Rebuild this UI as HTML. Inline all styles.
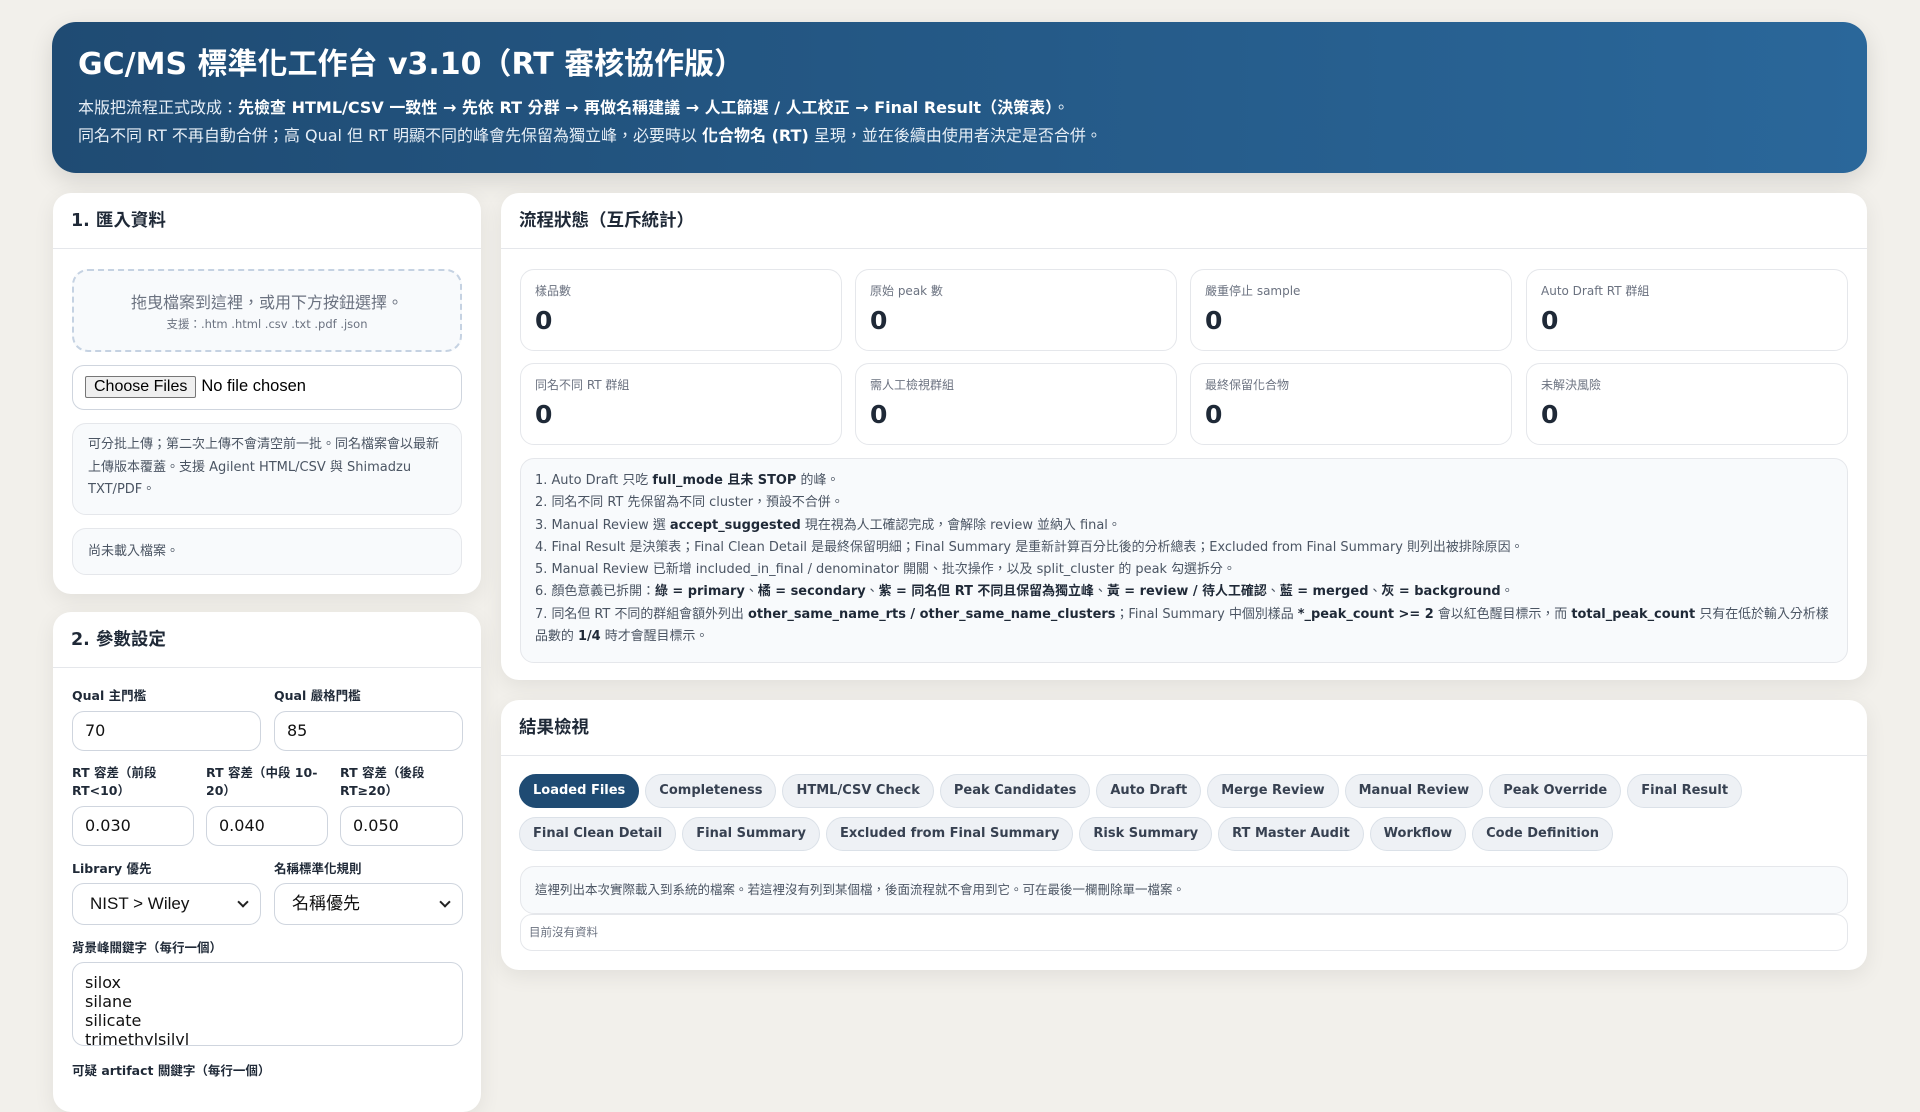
<!DOCTYPE html>
<html><head><meta charset="utf-8"><style>
*{box-sizing:border-box;margin:0;padding:0}
body{width:1920px;height:1080px;overflow:hidden;background:#f2f0eb;font-family:"DejaVu Sans","Liberation Sans","Noto Sans CJK TC",sans-serif;color:#1f2937;position:relative}
.hdr{position:absolute;left:52px;top:22px;width:1815px;height:151px;border-radius:24px;background:linear-gradient(90deg,#1f4b73,#2a679a);color:#fff;padding:22px 26px;box-shadow:0 8px 24px rgba(0,0,0,.12)}
.hdr h1{font-size:30px;font-weight:bold;line-height:42px;margin-bottom:8px}
.hdr p{font-size:16px;line-height:28px;color:#e6eef6}
.hdr b{color:#fff}
.card{position:absolute;background:#fff;border-radius:18px;box-shadow:0 6px 22px rgba(0,0,0,.07)}
.ch{height:56px;border-bottom:1px solid #e5e7eb;padding:0 18px;font-size:17.5px;font-weight:bold;line-height:56px;color:#1f2937}
.abs{position:absolute}
.drop{left:19px;top:76px;width:390px;height:83px;border:2px dashed #c5d2e2;border-radius:16px;background:#f8fafc;text-align:center;color:#6b7280}
.drop .a{font-size:16px;margin-top:18px}
.drop .b{font-size:11.5px;margin-top:3px}
.file{left:19px;top:172px;width:390px;height:45px;border:1px solid #cfd5de;border-radius:12px;font-family:"Liberation Sans",sans-serif;font-size:16.5px;padding:10px 12px;color:#000}
.file span.btn{display:inline-block;border:1px solid #767676;background:#efefef;border-radius:2px;padding:1px 8px;font-size:16px;margin-right:5px}
.note{left:19px;width:390px;background:#f8fafc;border:1px solid #e5e7eb;border-radius:14px;font-size:13px;color:#4b5563;line-height:22.5px;padding:12px 15px}
label{position:absolute;font-size:12.5px;font-weight:bold;color:#1f2937;line-height:18px}
.inp{position:absolute;border:1px solid #cfd5de;border-radius:12px;height:40px;font-size:16px;padding:0 12px;line-height:38px;color:#111}
.sel{height:42px;font-family:"Liberation Sans","Noto Sans CJK TC",sans-serif;font-size:17px;padding-left:17px;line-height:40px}
.sel:after{content:"";position:absolute;right:13px;top:14px;width:6px;height:6px;border-right:2px solid #222;border-bottom:2px solid #222;transform:rotate(45deg)}
.stat{position:absolute;width:322px;height:82px;border:1px solid #e5e7eb;border-radius:14px;padding:14px 14px}
.stat .l{font-size:12px;color:#6b7280;line-height:14px}
.stat .v{font-size:25px;font-weight:bold;color:#1f2937;margin-top:8px;line-height:30px}
.notes{left:19px;top:265px;width:1328px;height:205px;background:#f8fafc;border:1px solid #e5e7eb;border-radius:14px;padding:11px 14px;font-size:12.95px;line-height:22.3px;color:#4b5563}
.notes b{color:#1f2937}
.tabs{position:absolute;left:18px;top:74px;width:1320px}
.tab{display:inline-block;height:34px;line-height:32px;padding:0 13px;border:1px solid #dbe1e8;background:#eef1f5;border-radius:17px;font-size:13px;font-weight:bold;color:#374151;margin:0 6px 9px 0}
.tab.on{background:#1f4b73;color:#fff;border-color:#1f4b73}
</style></head><body>
<div class="hdr">
<h1>GC/MS 標準化工作台 v3.10（RT 審核協作版）</h1>
<p>本版把流程正式改成：<b>先檢查 HTML/CSV 一致性 → 先依 RT 分群 → 再做名稱建議 → 人工篩選 / 人工校正 → Final Result（決策表）</b>。</p>
<p>同名不同 RT 不再自動合併；高 Qual 但 RT 明顯不同的峰會先保留為獨立峰，必要時以 <b>化合物名 (RT)</b> 呈現，並在後續由使用者決定是否合併。</p>
</div>

<div class="card" style="left:53px;top:193px;width:428px;height:401px">
<div class="ch">1. 匯入資料</div>
<div class="abs drop"><div class="a">拖曳檔案到這裡，或用下方按鈕選擇。</div><div class="b">支援：.htm .html .csv .txt .pdf .json</div></div>
<div class="abs file"><span class="btn">Choose Files</span>No file chosen</div>
<div class="abs note" style="top:230px;height:92px;padding-top:10px">可分批上傳；第二次上傳不會清空前一批。同名檔案會以最新上傳版本覆蓋。支援 Agilent HTML/CSV 與 Shimadzu TXT/PDF。</div>
<div class="abs note" style="top:335px;height:47px;padding-top:12px">尚未載入檔案。</div>
</div>

<div class="card" style="left:53px;top:612px;width:428px;height:500px">
<div class="ch" style="height:56px">2. 參數設定</div>
<label style="left:19px;top:75px">Qual 主門檻</label>
<label style="left:221px;top:75px">Qual 嚴格門檻</label>
<div class="inp" style="left:19px;top:99px;width:189px">70</div>
<div class="inp" style="left:221px;top:99px;width:189px">85</div>
<label style="left:19px;top:152px;width:120px">RT 容差（前段 RT&lt;10）</label>
<label style="left:153px;top:152px;width:120px">RT 容差（中段 10-20）</label>
<label style="left:287px;top:152px;width:120px">RT 容差（後段 RT≥20）</label>
<div class="inp" style="left:19px;top:194px;width:122px">0.030</div>
<div class="inp" style="left:153px;top:194px;width:122px">0.040</div>
<div class="inp" style="left:287px;top:194px;width:123px">0.050</div>
<label style="left:19px;top:248px">Library 優先</label>
<label style="left:221px;top:248px">名稱標準化規則</label>
<div class="inp sel" style="left:19px;top:271px;width:189px">NIST &gt; Wiley</div>
<div class="inp sel" style="left:221px;top:271px;width:189px">名稱優先</div>
<label style="left:19px;top:327px">背景峰關鍵字（每行一個）</label>
<div class="inp" style="left:19px;top:350px;width:391px;height:84px;line-height:19px;padding-top:10px;font-size:16px;overflow:hidden">silox<br>silane<br>silicate<br>trimethylsilyl</div>
<label style="left:19px;top:450px">可疑 artifact 關鍵字（每行一個）</label>
</div>

<div class="card" style="left:501px;top:193px;width:1366px;height:487px">
<div class="ch">流程狀態（互斥統計）</div>
<div class="stat" style="left:19px;top:76px"><div class="l">樣品數</div><div class="v">0</div></div>
<div class="stat" style="left:354px;top:76px"><div class="l">原始 peak 數</div><div class="v">0</div></div>
<div class="stat" style="left:689px;top:76px"><div class="l">嚴重停止 sample</div><div class="v">0</div></div>
<div class="stat" style="left:1025px;top:76px"><div class="l">Auto Draft RT 群組</div><div class="v">0</div></div>
<div class="stat" style="left:19px;top:170px"><div class="l">同名不同 RT 群組</div><div class="v">0</div></div>
<div class="stat" style="left:354px;top:170px"><div class="l">需人工檢視群組</div><div class="v">0</div></div>
<div class="stat" style="left:689px;top:170px"><div class="l">最終保留化合物</div><div class="v">0</div></div>
<div class="stat" style="left:1025px;top:170px"><div class="l">未解決風險</div><div class="v">0</div></div>
<div class="abs notes">
1. Auto Draft 只吃 <b>full_mode 且未 STOP</b> 的峰。<br>
2. 同名不同 RT 先保留為不同 cluster，預設不合併。<br>
3. Manual Review 選 <b>accept_suggested</b> 現在視為人工確認完成，會解除 review 並納入 final。<br>
4. Final Result 是決策表；Final Clean Detail 是最終保留明細；Final Summary 是重新計算百分比後的分析總表；Excluded from Final Summary 則列出被排除原因。<br>
5. Manual Review 已新增 included_in_final / denominator 開關、批次操作，以及 split_cluster 的 peak 勾選拆分。<br>
6. 顏色意義已拆開：<b>綠 = primary</b>、<b>橘 = secondary</b>、<b>紫 = 同名但 RT 不同且保留為獨立峰</b>、<b>黃 = review / 待人工確認</b>、<b>藍 = merged</b>、<b>灰 = background</b>。<br>
7. 同名但 RT 不同的群組會額外列出 <b>other_same_name_rts / other_same_name_clusters</b>；Final Summary 中個別樣品 <b>*_peak_count &gt;= 2</b> 會以紅色醒目標示，而 <b>total_peak_count</b> 只有在低於輸入分析樣品數的 <b>1/4</b> 時才會醒目標示。
</div>
</div>

<div class="card" style="left:501px;top:700px;width:1366px;height:270px">
<div class="ch">結果檢視</div>
<div class="tabs">
<span class="tab on">Loaded Files</span><span class="tab">Completeness</span><span class="tab">HTML/CSV Check</span><span class="tab">Peak Candidates</span><span class="tab">Auto Draft</span><span class="tab">Merge Review</span><span class="tab">Manual Review</span><span class="tab">Peak Override</span><span class="tab">Final Result</span><br>
<span class="tab">Final Clean Detail</span><span class="tab">Final Summary</span><span class="tab">Excluded from Final Summary</span><span class="tab">Risk Summary</span><span class="tab">RT Master Audit</span><span class="tab">Workflow</span><span class="tab">Code Definition</span>
</div>
<div class="abs" style="left:19px;top:166px;width:1328px;height:48px;background:#f8fafc;border:1px solid #e5e7eb;border-radius:14px;font-size:12.5px;color:#4b5563;line-height:46px;padding-left:14px">這裡列出本次實際載入到系統的檔案。若這裡沒有列到某個檔，後面流程就不會用到它。可在最後一欄刪除單一檔案。</div>
<div class="abs" style="left:19px;top:214px;width:1328px;height:37px;border:1px solid #e5e7eb;border-radius:12px;font-size:11.5px;color:#6b7280;line-height:35px;padding-left:8px">目前沒有資料</div>
</div>
</body></html>
